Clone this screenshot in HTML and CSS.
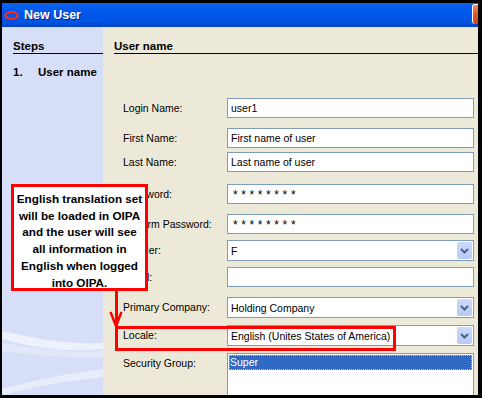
FILE: index.html
```html
<!DOCTYPE html>
<html>
<head>
<meta charset="UTF-8">
<title>New User</title>
<link rel="stylesheet" href="styles.css">
</head>
<body>

<div class="window">
	<div class="titlebar">
		<div class="title">
			<svg class="logo" width="15" height="9" viewBox="0 0 15 9"><ellipse cx="7.5" cy="4.5" rx="6.3" ry="3.4" fill="none" stroke="#ff2a1a" stroke-width="2"/></svg>
			<span>New User</span>
		</div>
		<div class="close"></div>
	</div>

	<div class="main">
		<div class="steps">
			<div class="heading">Steps</div>
			<div class="step"><span class="num">1.</span>User name</div>
			<svg class="swoosh" width="101" height="72" viewBox="0 0 101 72">
				<path d="M0 8 C30 14 60 22 101 20 L101 26 C60 30 30 24 0 16 Z" fill="#ffffff" opacity="0.55"/>
				<path d="M0 20 C35 26 70 30 101 28 L101 34 C70 36 35 32 0 28 Z" fill="#ffffff" opacity="0.3"/>
				<path d="M0 66 C30 58 65 50 101 46 L101 54 C65 58 30 64 0 72 Z" fill="#ffffff" opacity="0.45"/>
			</svg>
		</div>

		<div class="content">
			<div class="heading">User name</div>

			<div class="form">
				<div class="label">Login Name:</div>
				<div class="field">user1</div>

				<div class="label">First Name:</div>
				<div class="field">First name of user</div>

				<div class="label">Last Name:</div>
				<div class="field">Last name of user</div>

				<div class="label">Password:</div>
				<div class="field secret">********</div>

				<div class="label">Confirm Password:</div>
				<div class="field secret">********</div>

				<div class="label">Gender:</div>
				<div class="field select"><span>F</span><span class="drop"><svg width="9" height="6" viewBox="0 0 9 6"><path d="M1 1 L4.5 4.5 L8 1" fill="none" stroke="#4d6185" stroke-width="2"/></svg></span></div>

				<div class="label">Email:</div>
				<div class="field"></div>

				<div class="label">Primary Company:</div>
				<div class="field select"><span>Holding Company</span><span class="drop"><svg width="9" height="6" viewBox="0 0 9 6"><path d="M1 1 L4.5 4.5 L8 1" fill="none" stroke="#4d6185" stroke-width="2"/></svg></span></div>

				<div class="label">Locale:</div>
				<div class="field select"><span>English (Unites States of America)</span><span class="drop"><svg width="9" height="6" viewBox="0 0 9 6"><path d="M1 1 L4.5 4.5 L8 1" fill="none" stroke="#4d6185" stroke-width="2"/></svg></span></div>

				<div class="label">Security Group:</div>
				<div class="list">
					<div class="selected">Super</div>
				</div>
			</div>
		</div>
	</div>
</div>

<!-- annotation laid over the dialog -->
<div class="note">English translation set<br>will be loaded in OIPA<br>and the user will see<br>all information in<br>English when logged<br>into OIPA.</div>
<div class="note-line"></div>
<svg class="note-arrow" width="14" height="16" viewBox="0 0 14 16"><polyline points="1.5,1 7,15 12.5,1" fill="none" stroke="#ff0000" stroke-width="2.5"/></svg>
<div class="note-frame"></div>

</body>
</html>
```

FILE: styles.css
```css
body
{
	margin: 0;
	padding: 3px 4px 3px 2px;
	width: 476px;
	height: 392px;
	background-color: #000;
	position: relative;
	overflow: hidden;
	font-family: "Liberation Sans", Arial, sans-serif;
	color: #000;
}
.window { height: 392px; display: flex; flex-direction: column; }

/* title bar */
.titlebar
{
	height: 24px;
	display: flex;
	justify-content: space-between;
	background: linear-gradient(#0c63f2, #0058ec 35%, #0054e3 80%, #0043c4);
}
.title
{
	display: flex;
	align-items: center;
	gap: 5px;
	padding-left: 2px;
	color: #fff;
	font-weight: bold;
	font-size: 12.5px;
	text-shadow: 1px 1px #0a2a8c;
}
.close
{
	width: 5px;
	height: 19px;
	margin-top: 1px;
	border-left: 1px solid #fff;
	border-top: 1px solid #fff;
	border-radius: 3px 0 0 3px;
	background: linear-gradient(#ec8a62, #e0562c 50%, #cf4316);
}

.main { flex: 1; display: flex; overflow: hidden; }

/* steps column */
.steps
{
	width: 101px;
	box-sizing: border-box;
	padding: 12px 0 0 11px;
	background-color: #d6dff7;
	position: relative;
	overflow: hidden;
}
.swoosh { position: absolute; left: 0; bottom: 0; }
.heading
{
	font-size: 11.5px;
	font-weight: bold;
	line-height: 14px;
	border-bottom: 1px solid #000;
}
.step { margin-top: 11px; font-size: 11.5px; font-weight: bold; line-height: 14px; }
.step .num { display: inline-block; width: 25px; }

/* form */
.content
{
	flex: 1;
	padding: 12px 0 0 11px;
	background-color: #ece9d8;
	overflow: hidden;
}
.form
{
	margin: 44px 0 0 9px;
	display: grid;
	grid-template-columns: 104px 247px;
	grid-template-rows: 30px 24px 32px 30px 26px 27px 30px 28px 28px 50px;
	font-size: 10.5px;
}
.label { line-height: 20px; }
.field
{
	height: 20px;
	box-sizing: border-box;
	border: 1px solid #7f9db9;
	background-color: #fff;
	line-height: 18px;
	padding-left: 3px;
}
.secret { font-size: 12px; letter-spacing: 3.6px; line-height: 20px; padding-left: 5px; }
.select
{
	height: 21px;
	display: flex;
	justify-content: space-between;
	align-items: center;
	padding-right: 1px;
}
.drop
{
	width: 15px;
	height: 17px;
	border-radius: 2px;
	background: linear-gradient(#cbdafc, #b6caf6);
	display: flex;
	align-items: center;
	justify-content: center;
}
.list
{
	height: 50px;
	box-sizing: border-box;
	border: 1px solid #7f9db9;
	background-color: #fff;
	padding: 1px;
}
.selected
{
	height: 15px;
	line-height: 15px;
	padding-left: 1px;
	background-color: #316ac5;
	color: #fff;
	outline: 1px dotted #d8c860;
	outline-offset: -1px;
}

/* red annotation */
.note
{
	position: absolute;
	left: 11px;
	top: 184px;
	width: 137px;
	height: 107px;
	box-sizing: border-box;
	border: 3px solid #ff0000;
	background-color: #fff;
	padding-top: 4px;
	font-weight: bold;
	font-size: 11.7px;
	line-height: 16.7px;
	text-align: center;
}
.note-line { position: absolute; left: 115px; top: 290px; width: 3px; height: 37px; background-color: #ff0000; }
.note-arrow { position: absolute; left: 109px; top: 311px; }
.note-frame
{
	position: absolute;
	left: 115px;
	top: 326px;
	width: 281px;
	height: 25px;
	box-sizing: border-box;
	border: 3px solid #ff0000;
}
```
